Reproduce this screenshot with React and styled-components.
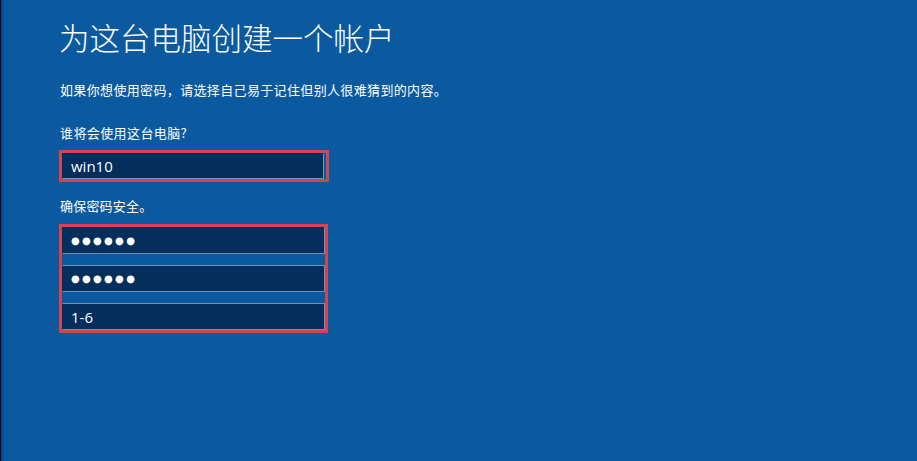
import React from "react";
import styled, { createGlobalStyle } from "styled-components";

const Global = createGlobalStyle`
  html, body { margin: 0; padding: 0; background: #0b5aa0; }
  body { font-family: "Noto Sans CJK SC", "Noto Sans", sans-serif; }
`;

const Page = styled.div`
  width: 917px;
  height: 461px;
  box-sizing: border-box;
  background: #0b5aa0;
  box-shadow: inset 1px 0 0 #06142a, inset 2px 0 0 #083d72, inset 4px 0 0 #0a4f8e;
  padding: 14px 0 0 59px;
  color: #ffffff;
  display: flex;
  flex-direction: column;
  align-items: flex-start;
`;

const Title = styled.h1`
  margin: 0;
  font-family: "Noto Sans CJK SC", sans-serif;
  font-weight: 300;
  font-size: 30.5px;
  line-height: 46px;
  letter-spacing: 0;
  color: #ffffff;
`;

const Text = styled.p`
  margin: ${(p) => p.$mt}px 0 0 1px;
  font-family: "Noto Sans CJK SC", sans-serif;
  font-size: 13px;
  line-height: 20px;
  color: #ffffff;
  letter-spacing: ${(p) => p.$ls || 0}px;
`;

const Marked = styled.div`
  margin-top: ${(p) => p.$mt}px;
  width: ${(p) => p.$w}px;
  box-sizing: border-box;
  border: 3px solid #d2454f;
  padding-right: ${(p) => p.$pr || 0}px;
  display: flex;
  flex-direction: column;
  gap: 11px;
`;

const Field = styled.div`
  height: ${(p) => p.$h}px;
  box-sizing: border-box;
  background: #042e5c;
  border: 1px solid #6e93bd;
  border-top-color: ${(p) => (p.$first ? "#042e5c" : "#6e93bd")};
  border-left-color: #042e5c;
  display: flex;
  align-items: center;
  padding-left: 8px;
  font-family: "Open Sans", "Noto Sans", sans-serif;
  font-size: 15px;
  color: #ffffff;
`;

const Dots = styled.span`
  font-family: "DejaVu Sans", sans-serif;
  font-size: 10px;
  letter-spacing: 2.3px;
  color: #ffffff;
`;

export default function App() {
  return (
    <>
      <Global />
      <Page>
        <Title>为这台电脑创建一个帐户</Title>
        <Text $mt={20} $ls={0.35}>如果你想使用密码，请选择自己易于记住但别人很难猜到的内容。</Text>
        <Text $mt={23} $ls={0.4}>谁将会使用这台电脑?</Text>
        <Marked $mt={7} $w={270} $pr={2}>
          <Field $h={26} $first>win10</Field>
        </Marked>
        <Text $mt={14} $ls={0.2}>确保密码安全。</Text>
        <Marked $mt={8} $w={269} $pr={0}>
          <Field $h={27} $first><Dots>●●●●●●</Dots></Field>
          <Field $h={27}><Dots>●●●●●●</Dots></Field>
          <Field $h={27}>1-6</Field>
        </Marked>
      </Page>
    </>
  );
}
